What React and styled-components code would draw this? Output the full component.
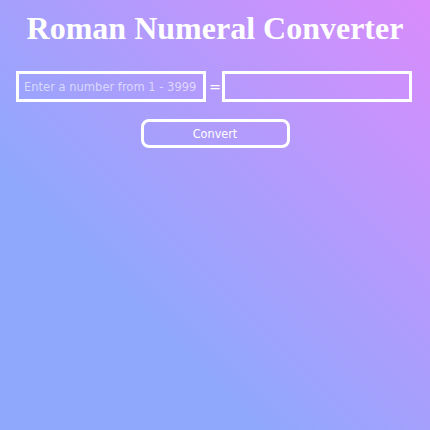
import React, { useState } from 'react';
import styled, { createGlobalStyle } from 'styled-components';

const GlobalStyle = createGlobalStyle`
    html, body {
        margin: 0;
        padding: 0;
        height: 100%;
    }

    body {
        min-height: 430px;
        background: linear-gradient(to top right, #8fa8fc 30%, #da8cfc 100%);
        font-family: "DejaVu Sans Condensed", "DejaVu Sans", sans-serif;
    }
`;

const Page = styled.div`
    display: flex;
    flex-direction: column;
    align-items: center;
    padding-top: 10px;
`;

const Title = styled.h1`
    margin: 0;
    font-family: "Liberation Serif", "Times New Roman", serif;
    font-weight: bold;
    font-size: 32px;
    line-height: 36px;
    color: #fff;
`;

const Row = styled.div`
    display: flex;
    align-items: center;
    gap: 3px;
    margin-top: 25px;
    margin-right: 2px;
`;

const Field = styled.input`
    box-sizing: border-box;
    width: 190px;
    height: 31px;
    border: 3px solid #fff;
    background: transparent;
    color: #fff;
    font-family: "DejaVu Sans Condensed", "DejaVu Sans", sans-serif;
    font-size: 12.8px;
    padding: 0 5px;
    outline: none;

    &::placeholder {
        color: rgba(255, 255, 255, 0.6);
    }
`;

const Equals = styled.span`
    color: #fff;
    font-family: "DejaVu Sans Condensed", "DejaVu Sans", sans-serif;
    font-size: 16px;
    width: 10px;
    text-align: center;
`;

const ConvertButton = styled.button`
    box-sizing: border-box;
    margin-top: 17px;
    width: 149px;
    height: 29px;
    border: 3px solid #fff;
    border-radius: 8px;
    background: transparent;
    color: #fff;
    font-family: "DejaVu Sans Condensed", "DejaVu Sans", sans-serif;
    font-size: 12.5px;
    cursor: pointer;
`;

const toRoman = (num) => {
    const table = [
        [1000, 'M'], [900, 'CM'], [500, 'D'], [400, 'CD'],
        [100, 'C'], [90, 'XC'], [50, 'L'], [40, 'XL'],
        [10, 'X'], [9, 'IX'], [5, 'V'], [4, 'IV'], [1, 'I'],
    ];
    let out = '';
    table.forEach(([value, letter]) => {
        while (num >= value) {
            out += letter;
            num -= value;
        }
    });
    return out;
};

export default function App() {
    const [value, setValue] = useState('');
    const [result, setResult] = useState('');

    const convert = () => {
        const n = parseInt(value, 10);
        setResult(n >= 1 && n <= 3999 ? toRoman(n) : '');
    };

    return (
        <>
            <GlobalStyle />
            <Page>
                <Title>Roman Numeral Converter</Title>
                <Row>
                    <Field
                        placeholder="Enter a number from 1 - 3999"
                        value={value}
                        onChange={e => setValue(e.target.value)}
                    />
                    <Equals>=</Equals>
                    <Field value={result} readOnly />
                </Row>
                <ConvertButton onClick={convert}>Convert</ConvertButton>
            </Page>
        </>
    );
}
